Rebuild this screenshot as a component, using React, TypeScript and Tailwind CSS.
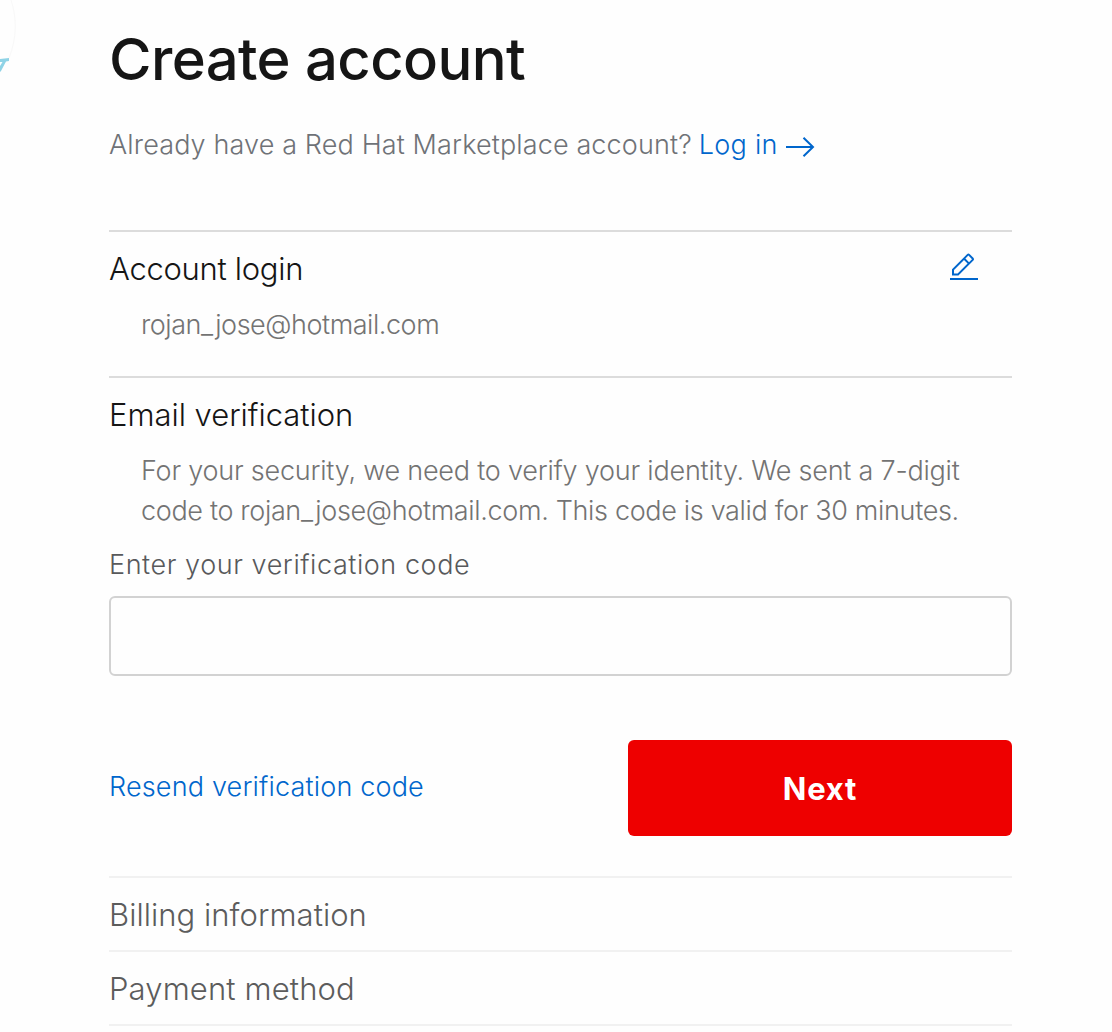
function ArrowRight() {
  return (
    <svg className="ml-[7px] mt-2.5 h-6 w-8" viewBox="0 0 32 24" fill="none" stroke="#0066cc" strokeWidth="2">
      <path d="M1 12H28M18.5 2.7L28 12L18.5 21.3" />
    </svg>
  );
}

function EditIcon() {
  return (
    <svg className="h-8 w-8" viewBox="0 0 32 32" fill="#0066cc">
      <path d="M2 27h28v2H2z" />
      <path transform="translate(0 .6)" d="M25.4 9c.8-.8.8-2 0-2.8l-3.6-3.6c-.8-.8-2-.8-2.8 0l-15 15V24h6.4l15-15zm-5-5L24 7.6l-3 3L17.4 7l3-3zM6 22v-3.6l10-10 3.6 3.6-10 10H6z" />
    </svg>
  );
}

function CornerDecoration() {
  return (
    <svg className="absolute left-0 top-0 h-20 w-5" viewBox="0 0 20 80" fill="none">
      <path d="M11 0C17 18 17 38 9 58" stroke="#f8f8f8" />
      <path d="M0 59L9 58V61L6 61.5L1 71L0 72V66L2.5 62L0 62Z" fill="#8fd3e6" />
    </svg>
  );
}

export default function App() {
  return (
    <div className="relative h-[1032px] overflow-hidden bg-[#fefefe] font-['Inter',sans-serif] text-[27px] font-light leading-10 text-[#6f7277]">
      <CornerDecoration />
      <main className="ml-[109px] w-[903px] whitespace-nowrap pt-[23px]">
        <h1 className="text-[58px] font-medium leading-[72px] tracking-[-0.6px] text-[#151515]">Create account</h1>
        <div className="mt-[30px] flex h-10">
          <span className="tracking-[0.13px]">Already have a Red Hat Marketplace account?</span>
          <a className="ml-[7px] flex tracking-[0.25px] text-[#0066cc]">
            Log in
            <ArrowRight />
          </a>
        </div>

        <section className="mt-[65px] h-[146px] border-t-2 border-[#dcdcdc] pt-[17px]">
          <div className="flex justify-between">
            <h2 className="text-[31px] tracking-[-0.3px] text-[#151515]">Account login</h2>
            <button className="mr-8 mt-0.5 h-8">
              <EditIcon />
            </button>
          </div>
          <p className="ml-8 mt-4 tracking-[-0.46px] text-[#737373]">rojan_jose@hotmail.com</p>
        </section>

        <section className="h-[500px] border-t-2 border-[#dcdcdc] pt-[17px]">
          <h2 className="text-[31px] tracking-[-0.02px] text-[#151515]">Email verification</h2>
          <p className="ml-8 mt-4 text-[#737373]">
            <span className="block tracking-[-0.22px]">For your security, we need to verify your identity. We sent a 7-digit</span>
            <span className="block tracking-[-0.34px]">code to rojan_jose@hotmail.com. This code is valid for 30 minutes.</span>
          </p>
          <label className="mt-3.5 block tracking-[0.56px] text-[#58595b]" htmlFor="code">Enter your verification code</label>
          <input id="code" className="mt-[11px] block h-20 w-full rounded-md border-2 border-[#d2d2d2] px-4 outline-none" />
          <div className="mt-16 flex h-24 items-center justify-between">
            <a className="-mt-0.5 tracking-[0.17px] text-[#0066cc]">Resend verification code</a>
            <button className="h-24 w-96 rounded-md bg-[#ee0000] pt-0.5 text-[31px] font-bold tracking-[0.8px] text-white">Next</button>
          </div>
        </section>

        <section className="h-[74px] border-t-2 border-[#f1f1f1] pt-[17px]">
          <h2 className="text-[31px] tracking-[0.04px] text-[#5c5c5c]">Billing information</h2>
        </section>
        <section className="h-[76px] border-y-2 border-[#f1f1f1] pt-[17px]">
          <h2 className="text-[31px] tracking-[0.13px] text-[#5c5c5c]">Payment method</h2>
        </section>
      </main>
    </div>
  );
}
